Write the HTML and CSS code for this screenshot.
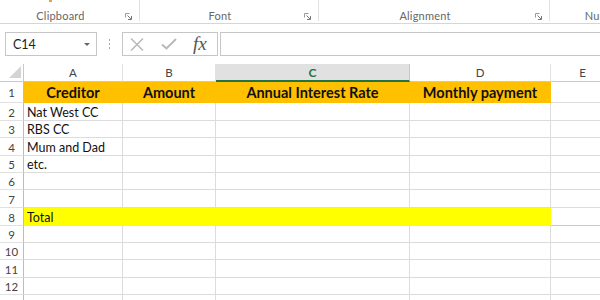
FILE: index.html
```html
<html>
<head>
<meta charset="UTF-8">
<meta name="viewport" content="width=device-width, initial-scale=1.0">
<link rel="stylesheet" href="styles.css">
</head>
<body>
<div class="excel">
    <!-- ribbon (bottom strip only) -->
    <div class="ribbon">
        <div class="group g-clip">
            <div class="tools"><span class="paste-bit"></span></div>
            <div class="group-foot"><span class="group-name">Clipboard</span><span class="launcher"><svg width="7" height="7" viewBox="0 0 7 7"><path d="M0.5 4.5V0.5H4.5" stroke="#9a9a9a" fill="none"/><path d="M2.5 2.5L6 6M6.5 3V6.5H3" stroke="#777" fill="none"/></svg></span></div>
        </div>
        <div class="group g-font">
            <div class="tools"></div>
            <div class="group-foot"><span class="group-name">Font</span><span class="launcher"><svg width="7" height="7" viewBox="0 0 7 7"><path d="M0.5 4.5V0.5H4.5" stroke="#9a9a9a" fill="none"/><path d="M2.5 2.5L6 6M6.5 3V6.5H3" stroke="#777" fill="none"/></svg></span></div>
        </div>
        <div class="group g-align">
            <div class="tools"></div>
            <div class="group-foot"><span class="group-name">Alignment</span><span class="launcher"><svg width="7" height="7" viewBox="0 0 7 7"><path d="M0.5 4.5V0.5H4.5" stroke="#9a9a9a" fill="none"/><path d="M2.5 2.5L6 6M6.5 3V6.5H3" stroke="#777" fill="none"/></svg></span></div>
        </div>
        <div class="group g-num">
            <div class="tools"></div>
            <div class="group-foot"><span class="group-name">Number</span></div>
        </div>
    </div>

    <!-- formula bar -->
    <div class="formula-bar">
        <div class="name-box"><span class="cell-ref">C14</span><span class="caret"></span></div>
        <div class="grip"><i></i><i></i><i></i></div>
        <div class="fx-buttons">
            <svg class="btn-x" width="14" height="13" viewBox="0 0 14 13"><path d="M1 0.5L13 12.5M13 0.5L1 12.5" stroke="#b9b9b9" stroke-width="1.5" fill="none"/></svg>
            <svg class="btn-ok" width="16" height="12" viewBox="0 0 16 12"><path d="M1 6.5L5.5 10.5L15 1" stroke="#b9b9b9" stroke-width="2" fill="none"/></svg>
            <span class="fx">fx</span>
        </div>
        <div class="formula-input"></div>
    </div>

    <!-- sheet -->
    <div class="sheet">
        <div class="corner"><span class="tri"></span></div><div class="ch">A</div><div class="ch">B</div><div class="ch sel">C</div><div class="ch">D</div><div class="ch">E</div>

        <div class="rh">1</div><div class="c hd">Creditor</div><div class="c hd">Amount</div><div class="c hd">Annual Interest Rate</div><div class="c hd">Monthly payment</div><div class="c"></div>
        <div class="rh">2</div><div class="c">Nat West CC</div><div class="c"></div><div class="c"></div><div class="c"></div><div class="c"></div>
        <div class="rh">3</div><div class="c">RBS CC</div><div class="c"></div><div class="c"></div><div class="c"></div><div class="c"></div>
        <div class="rh">4</div><div class="c">Mum and Dad</div><div class="c"></div><div class="c"></div><div class="c"></div><div class="c"></div>
        <div class="rh">5</div><div class="c">etc.</div><div class="c"></div><div class="c"></div><div class="c"></div><div class="c"></div>
        <div class="rh">6</div><div class="c"></div><div class="c"></div><div class="c"></div><div class="c"></div><div class="c"></div>
        <div class="rh">7</div><div class="c"></div><div class="c"></div><div class="c"></div><div class="c"></div><div class="c"></div>
        <div class="rh">8</div><div class="c tot">Total</div><div class="c tot"></div><div class="c tot"></div><div class="c tot"></div><div class="c tot-end"></div>
        <div class="rh">9</div><div class="c"></div><div class="c"></div><div class="c"></div><div class="c"></div><div class="c"></div>
        <div class="rh">10</div><div class="c"></div><div class="c"></div><div class="c"></div><div class="c"></div><div class="c"></div>
        <div class="rh">11</div><div class="c"></div><div class="c"></div><div class="c"></div><div class="c"></div><div class="c"></div>
        <div class="rh">12</div><div class="c"></div><div class="c"></div><div class="c"></div><div class="c"></div><div class="c"></div>
        <div class="rh"></div><div class="c"></div><div class="c"></div><div class="c"></div><div class="c"></div><div class="c"></div>
    </div>
</div>
</body>
</html>
```

FILE: styles.css
```css
* { margin: 0; padding: 0; box-sizing: border-box; }
body { width: 600px; height: 300px; overflow: hidden; background: #fff; font-family: Lato, "Open Sans", sans-serif; color: #222; }
.excel { width: 600px; height: 300px; overflow: hidden; }

/* ribbon */
.ribbon { display: flex; height: 24px; border-bottom: 1px solid #d6d6d6; overflow: hidden; }
.ribbon .group { display: flex; flex-direction: column; flex-shrink: 0; border-right: 1px solid #e1e1e1; height: 21px; }
.ribbon .g-clip { width: 140px; }
.ribbon .g-font { width: 179px; }
.ribbon .g-align { width: 231px; }
.ribbon .g-num { width: 100px; border-right: none; }
.ribbon .tools { height: 10px; }
.ribbon .paste-bit { display: block; width: 3px; height: 2px; margin-left: 49px; background: #f0a030; }
.ribbon .group-foot { display: flex; align-items: center; height: 11px; }
.ribbon .group-name { flex: 1; text-align: center; font-size: 11px; line-height: 11px; color: #666; letter-spacing: 0.2px; }
.ribbon .launcher { display: flex; width: 7px; height: 7px; margin: 2px 7px 0 4px; }
.ribbon .g-num .group-name { padding-left: 10px; }

/* formula bar */
.formula-bar { display: flex; align-items: center; height: 24px; margin-top: 8px; }
.name-box { display: flex; align-items: center; width: 92px; height: 24px; margin-left: 5px; border: 1px solid #c6c6c6; background: #fff; }
.name-box .cell-ref { flex: 1; padding-left: 7px; font-size: 12.5px; color: #222; }
.name-box .caret { width: 0; height: 0; margin-right: 6px; border-left: 3px solid transparent; border-right: 3px solid transparent; border-top: 3px solid #666; }
.grip { display: flex; flex-direction: column; gap: 2px; width: 25px; align-items: center; }
.grip i { display: block; width: 1px; height: 2px; background: #aaa; }
.fx-buttons { display: flex; align-items: center; width: 96px; height: 24px; border: 1px solid #c6c6c6; }
.fx-buttons .btn-x { margin-left: 7px; }
.fx-buttons .btn-ok { margin-left: 17px; }
.fx-buttons .fx { margin-left: 16px; margin-top: -1px; font-family: "Liberation Serif", serif; font-style: italic; font-size: 19px; color: #555; }
.formula-input { flex: 1; height: 24px; margin-left: 2px; margin-right: -5px; border: 1px solid #c6c6c6; }

/* sheet */
.sheet { display: grid; margin-top: 8px; grid-template-columns: 24px 99px 93px 194px 141px 64px;
    grid-template-rows: 18px 21px 18px 17px 18px 17px 17px 18px 18px 17px 17px 18px 17px 17px; }
.sheet > div { border-right: 1px solid #dcdcdc; border-bottom: 1px solid #dcdcdc; overflow: hidden; white-space: nowrap; }
.sheet .corner { display: flex; align-items: flex-end; justify-content: flex-end; padding: 0 2px 3px 0; border-right-color: #c8c8c8; border-bottom-color: #c8c8c8; }
.sheet .corner .tri { width: 12px; height: 12px; background: #d4d4d4; clip-path: polygon(100% 0, 100% 100%, 0 100%); }
.sheet .ch { display: flex; align-items: center; justify-content: center; font-size: 11.5px; color: #444; border-right-color: #e1e1e1; border-bottom-color: #c8c8c8; }
.sheet .ch.sel { background: #e1e1e1; color: #217346; font-weight: bold; font-size: 12px; border-bottom: 2px solid #217346; border-right-color: #c8c8c8; }
.sheet .rh { display: flex; align-items: center; justify-content: center; font-size: 11.5px; color: #444; border-right-color: #bdbdbd; border-bottom-color: #e1e1e1; padding-top: 1px; }
.sheet .c { display: flex; align-items: flex-end; padding-left: 3px; font-size: 12.5px; line-height: 15px; color: #111; }
.sheet .hd { justify-content: center; padding-left: 0; background: #ffc000; border-color: #ffc000; font-weight: bold; font-size: 14.5px; line-height: 18px; }
.sheet .tot { background: #ffff00; border-color: #ffff00; }
.sheet .tot-end { border-top: none; border-bottom-color: #c8c8c8; }
```
